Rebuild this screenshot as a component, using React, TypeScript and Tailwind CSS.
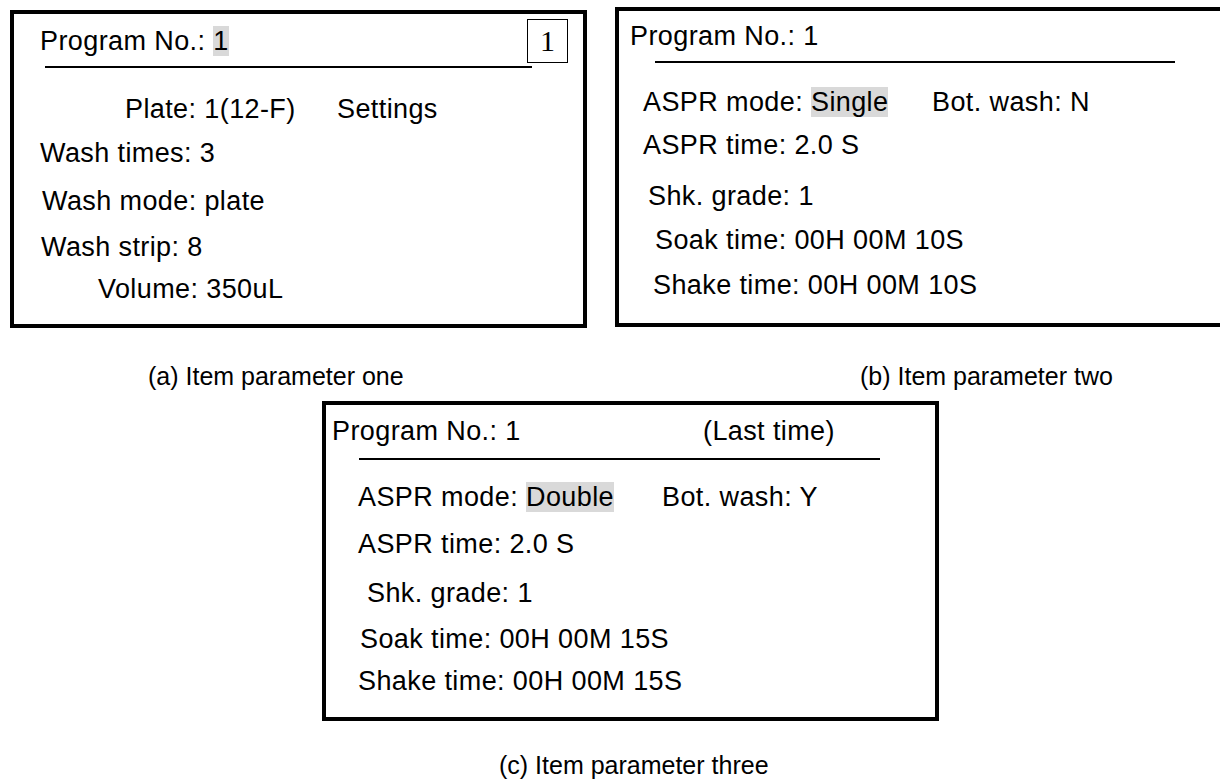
import type { ReactNode } from 'react'

function Row({ className = '', children }: { className?: string; children: ReactNode }) {
  return <div className={`h-[30px] whitespace-nowrap ${className}`}>{children}</div>
}

function Mark({ children }: { children: ReactNode }) {
  return <span className="bg-[#d9d9d9]">{children}</span>
}

export default function App() {
  return (
    <div className="w-[1220px] h-[780px] overflow-hidden bg-white text-black font-['Liberation_Sans',Arial,sans-serif] text-[27px] leading-[30px] tracking-[0.4px]">
      <div className="flex items-start pt-[7px]">
        {/* (a) item parameter one */}
        <section className="ml-[10px] mt-[3px] w-[577px] h-[318px] shrink-0 border-4 border-black flex flex-col">
          <div className="flex items-start">
            <Row className="mt-[12px] pl-[26px]">
              Program No.: <Mark>1</Mark>
            </Row>
            <div className="ml-auto mr-[15px] mt-[5px] w-[41px] h-[44px] border-[1.5px] border-black flex items-center justify-center font-['Liberation_Serif',serif] text-[30px] tracking-normal">
              1
            </div>
          </div>
          <div className="ml-[31px] mt-[3px] w-[487px] h-[2px] bg-black" />
          <Row className="mt-[26px] pl-[111px] flex">
            <span className="w-[212px]">Plate: 1(12-F)</span>
            <span>Settings</span>
          </Row>
          <Row className="mt-[14px] pl-[26px]">Wash times: 3</Row>
          <Row className="mt-[18px] pl-[28px]">Wash mode: plate</Row>
          <Row className="mt-[16px] pl-[27px]">Wash strip: 8</Row>
          <Row className="mt-[12px] pl-[84px]">Volume: 350uL</Row>
        </section>

        {/* (b) item parameter two */}
        <section className="ml-[28px] w-[640px] h-[320px] shrink-0 border-4 border-black flex flex-col">
          <Row className="mt-[10px] pl-[11px]">Program No.: 1</Row>
          <div className="ml-[36px] mt-[10px] w-[520px] h-[2px] bg-black" />
          <Row className="mt-[24px] pl-[24px] flex">
            <span className="w-[289px]">
              ASPR mode: <Mark>Single</Mark>
            </span>
            <span>Bot. wash: N</span>
          </Row>
          <Row className="mt-[13px] pl-[24px]">ASPR time: 2.0 S</Row>
          <Row className="mt-[21px] pl-[29px]">Shk. grade: 1</Row>
          <Row className="mt-[14px] pl-[36px]">Soak time: 00H 00M 10S</Row>
          <Row className="mt-[15px] pl-[34px]">Shake time: 00H 00M 10S</Row>
        </section>
      </div>

      <div className="mt-[33px] h-[30px] flex text-[25px] tracking-normal whitespace-nowrap">
        <div className="w-[860px] pl-[148px]">(a) Item parameter one</div>
        <div>(b) Item parameter two</div>
      </div>

      {/* (c) item parameter three */}
      <section className="mt-[10px] ml-[322px] w-[617px] h-[320px] border-4 border-black flex flex-col">
        <Row className="mt-[11px] pl-[6px] flex">
          <span className="w-[371px]">Program No.: 1</span>
          <span>(Last time)</span>
        </Row>
        <div className="ml-[33px] mt-[12px] w-[521px] h-[2px] bg-black" />
        <Row className="mt-[22px] pl-[32px] flex">
          <span className="w-[304px]">
            ASPR mode: <Mark>Double</Mark>
          </span>
          <span>Bot. wash: Y</span>
        </Row>
        <Row className="mt-[17px] pl-[32px]">ASPR time: 2.0 S</Row>
        <Row className="mt-[19px] pl-[41px]">Shk. grade: 1</Row>
        <Row className="mt-[16px] pl-[34px]">Soak time: 00H 00M 15S</Row>
        <Row className="mt-[12px] pl-[32px]">Shake time: 00H 00M 15S</Row>
      </section>

      <div className="mt-[29px] h-[30px] pl-[499px] text-[25px] tracking-normal whitespace-nowrap">
        (c) Item parameter three
      </div>
    </div>
  )
}
